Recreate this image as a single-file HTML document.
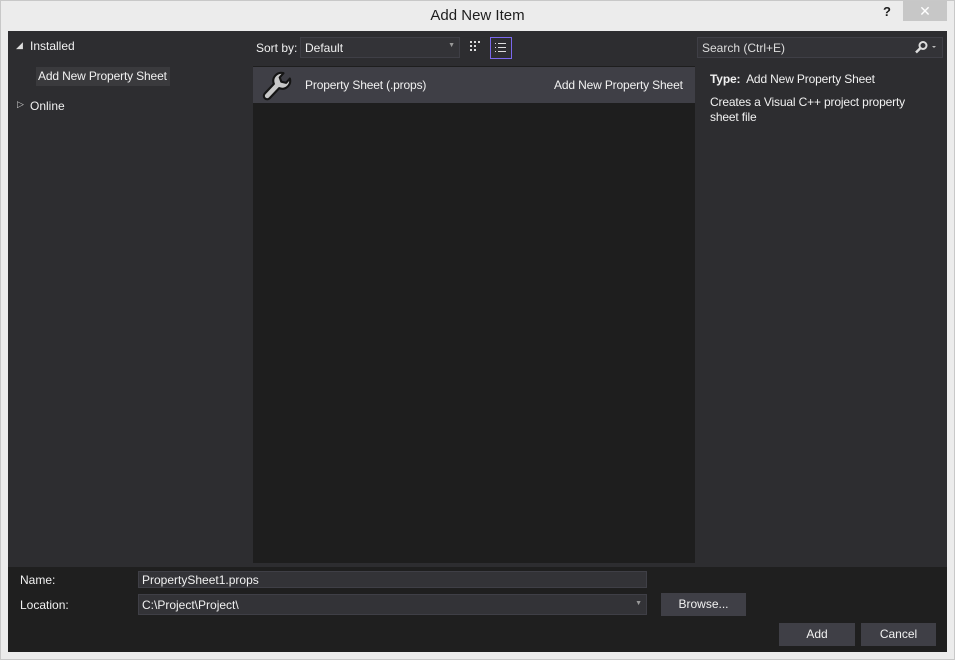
<!DOCTYPE html><html><head><style>
body{margin:0;width:955px;height:660px;background:#ececec;font-family:"Liberation Sans",sans-serif;font-size:12px;color:#f1f1f1;position:relative;overflow:hidden}
div{position:absolute;box-sizing:border-box}
.t{white-space:nowrap}
</style></head><body>
<div style="left:0;top:0;width:955px;height:660px;border:1px solid #c8c8c8"></div>
<div class="t" style="left:0;width:955px;top:7px;text-align:center;font-size:15px;color:#1e1e1e">Add New Item</div>
<div class="t" style="left:883px;top:4px;font-weight:bold;font-size:13px;color:#1e1e1e">?</div>
<div style="left:903px;top:1px;width:44px;height:20px;background:#c7c7c7;color:#fff;text-align:center;font-size:14px;line-height:20px">✕</div>
<div style="left:8px;top:31px;width:939px;height:621px;background:#2d2d30"></div>
<div style="left:8px;top:567px;width:939px;height:85px;background:#1f1f1f"></div>
<div style="left:253px;top:66px;width:442px;height:497px;background:#1e1e1e"></div>
<!-- left tree -->
<div class="t" style="left:16px;top:40px;font-size:9px;color:#ddd">◢</div>
<div class="t" style="left:30px;top:39px">Installed</div>
<div class="t" style="left:36px;top:67px;width:134px;height:19px;background:#3a3a3d;padding:2px 0 0 2px;letter-spacing:-0.15px">Add New Property Sheet</div>
<div class="t" style="left:17px;top:99px;font-size:9px;color:#ccc">▷</div>
<div class="t" style="left:30px;top:99px">Online</div>
<!-- sort -->
<div class="t" style="left:256px;top:41px">Sort by:</div>
<div style="left:300px;top:37px;width:160px;height:21px;background:#333337;border:1px solid #3f3f46;padding:3px 0 0 4px">Default<span style="position:absolute;right:4px;top:4px;font-size:7px;color:#999">▼</span></div>
<svg style="position:absolute;left:469px;top:40px" width="14" height="14"><g fill="#ddd"><rect x="1" y="1" width="2" height="2"/><rect x="5" y="1" width="2" height="2"/><rect x="9" y="1" width="2" height="2"/><rect x="1" y="5" width="2" height="2"/><rect x="5" y="5" width="2" height="2"/><rect x="1" y="9" width="2" height="2"/><rect x="5" y="9" width="2" height="2"/></g></svg>
<div style="left:490px;top:37px;width:22px;height:22px;border:1px solid #7b68ee"></div>
<svg style="position:absolute;left:494px;top:41px" width="14" height="14"><g fill="#ddd"><rect x="1" y="2" width="1" height="1"/><rect x="1" y="6" width="1" height="1"/><rect x="1" y="10" width="1" height="1"/><rect x="4" y="2" width="8" height="1"/><rect x="4" y="6" width="8" height="1"/><rect x="4" y="10" width="8" height="1"/></g></svg>
<!-- item -->
<div style="left:253px;top:67px;width:442px;height:36px;background:#3f3f46"></div>
<svg style="position:absolute;left:260px;top:70px" width="32" height="32" viewBox="0 0 30 30"><path d="M13 13 A7.5 7.5 0 0 1 22 3 L18.5 7 L20 11 L24.5 12 L28 8 A7.5 7.5 0 0 1 18 17 L9 26.5 A2.8 2.8 0 0 1 4.5 22 Z" fill="#c8c8c8" stroke="#151515" stroke-width="2" stroke-linejoin="round"/></svg>
<div class="t" style="left:305px;top:78px;letter-spacing:-0.15px">Property Sheet (.props)</div>
<div class="t" style="left:554px;top:78px;letter-spacing:-0.15px">Add New Property Sheet</div>
<!-- search -->
<div style="left:697px;top:37px;width:246px;height:21px;background:#333337;border:1px solid #3f3f46;padding:3px 0 0 4px;color:#ddd">Search (Ctrl+E)</div>
<svg style="position:absolute;left:914px;top:40px" width="26" height="14"><circle cx="9" cy="5.5" r="3.5" fill="none" stroke="#ddd" stroke-width="2"/><path d="M6.5 8 L2 12.5" stroke="#ddd" stroke-width="2.5"/><path d="M18 6 L22 6 L20 8Z" fill="#bbb"/></svg>
<div class="t" style="left:710px;top:72px;letter-spacing:-0.15px"><b>Type:</b>&nbsp; Add New Property Sheet</div>
<div style="left:710px;top:95px;width:220px;line-height:15px;letter-spacing:-0.15px">Creates a Visual C++ project property sheet file</div>
<!-- bottom -->
<div class="t" style="left:20px;top:573px">Name:</div>
<div style="left:138px;top:571px;width:509px;height:17px;background:#333337;border:1px solid #3f3f46;padding:1px 0 0 3px">PropertySheet1.props</div>
<div class="t" style="left:20px;top:598px">Location:</div>
<div style="left:138px;top:594px;width:509px;height:21px;background:#333337;border:1px solid #3f3f46;padding:3px 0 0 3px">C:\Project\Project\<span style="position:absolute;right:4px;top:5px;font-size:7px;color:#999">▼</span></div>
<div style="left:661px;top:593px;width:85px;height:23px;background:#3f3f46;text-align:center;line-height:23px">Browse...</div>
<div style="left:779px;top:623px;width:76px;height:23px;background:#3f3f46;text-align:center;line-height:23px">Add</div>
<div style="left:861px;top:623px;width:75px;height:23px;background:#3f3f46;text-align:center;line-height:23px">Cancel</div>
</body></html>
